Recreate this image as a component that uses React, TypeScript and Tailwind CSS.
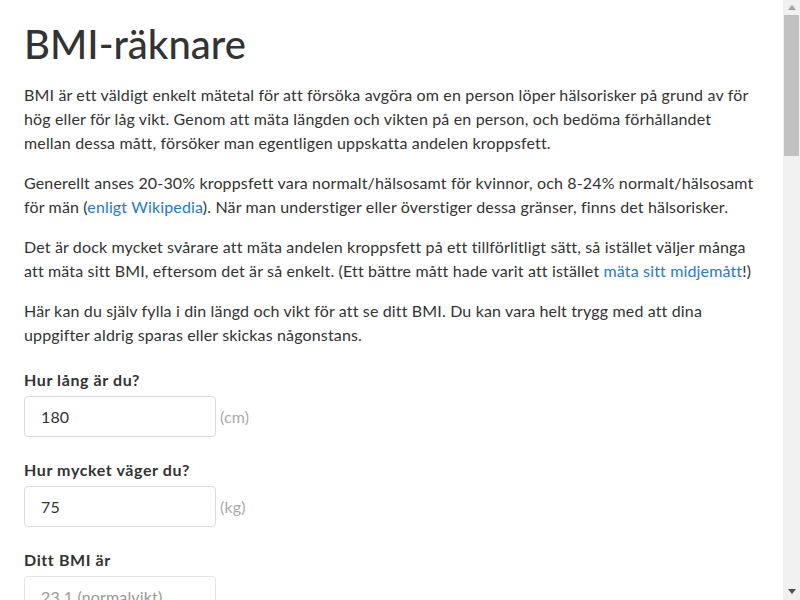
import React, { useState } from 'react';

function bmiLabel(bmi: number) {
  if (bmi < 18.5) return 'undervikt';
  if (bmi < 25) return 'normalvikt';
  if (bmi < 30) return 'övervikt';
  return 'fetma';
}

// the classic scrollbar in the screenshot, drawn over the right edge
function FakeScrollbar() {
  return (
    <div className="fixed right-0 top-0 flex h-screen w-[17px] flex-col bg-[#f1f1f1]">
      <div className="flex h-[15px] items-center justify-center">
        <svg width="8" height="5" viewBox="0 0 8 5"><path d="M0 5 L4 0 L8 5 Z" fill="#a3a3a3" /></svg>
      </div>
      <div className="mx-auto h-[141px] w-[15px] bg-[#c1c1c1]" />
      <div className="flex-1" />
      <div className="flex h-[17px] items-center justify-center">
        <svg width="8" height="5" viewBox="0 0 8 5"><path d="M0 0 L8 0 L4 5 Z" fill="#505050" /></svg>
      </div>
    </div>
  );
}

export default function App() {
  const [height, setHeight] = useState('180');
  const [weight, setWeight] = useState('75');

  const h = parseFloat(height) / 100;
  const w = parseFloat(weight);
  const bmi = h > 0 && w > 0 ? w / (h * h) : 0;
  const result = bmi ? `${bmi.toFixed(1)} (${bmiLabel(bmi)})` : '';

  return (
    <div className="min-h-[2400px] bg-white pl-6 pr-[41px] pt-5 text-[16px] leading-6 tracking-[0.15px] text-[#333] font-['Lato','Liberation_Sans',sans-serif]">
      <h1 className="mb-[15px] text-[40px] leading-[48px] font-medium tracking-normal text-[#333]">BMI-räknare</h1>

      <p className="mb-4">
        BMI är ett väldigt enkelt mätetal för att försöka avgöra om en person löper hälsorisker på grund av för hög eller för låg vikt. Genom att mäta längden och vikten på en person, och bedöma förhållandet mellan dessa mått, försöker man egentligen uppskatta andelen kroppsfett.
      </p>
      <p className="mb-4">
        Generellt anses 20-30% kroppsfett vara normalt/hälsosamt för kvinnor, och 8-24% normalt/hälsosamt för män (<a href="#" className="text-[#2478d8]">enligt Wikipedia</a>). När man understiger eller överstiger dessa gränser, finns det hälsorisker.
      </p>
      <p className="mb-4">
        Det är dock mycket svårare att mäta andelen kroppsfett på ett tillförlitligt sätt, så istället väljer många att mäta sitt BMI, eftersom det är så enkelt. (Ett bättre mått hade varit att istället <a href="#" className="text-[#2478d8]">mäta sitt midjemått</a>!)
      </p>
      <p className="mb-[21px]">
        Här kan du själv fylla i din längd och vikt för att se ditt BMI. Du kan vara helt trygg med att dina uppgifter aldrig sparas eller skickas någonstans.
      </p>

      <div className="flex flex-col gap-[21px]">
        <div>
          <label className="mb-1 block font-bold tracking-[0.6px]">Hur lång är du?</label>
          <div className="flex items-center gap-1">
            <input
              value={height}
              onChange={(e) => setHeight(e.target.value)}
              className="h-[41px] w-[192px] rounded border border-[#dcdcdc] px-4 text-[#333] outline-none"
            />
            <span className="text-[#aaa]">(cm)</span>
          </div>
        </div>

        <div>
          <label className="mb-1 block font-bold tracking-[0.6px]">Hur mycket väger du?</label>
          <div className="flex items-center gap-1">
            <input
              value={weight}
              onChange={(e) => setWeight(e.target.value)}
              className="h-[41px] w-[192px] rounded border border-[#dcdcdc] px-4 text-[#333] outline-none"
            />
            <span className="text-[#aaa]">(kg)</span>
          </div>
        </div>

        <div>
          <label className="mb-1 block font-bold tracking-[0.6px]">Ditt BMI är</label>
          <input
            readOnly
            value={result}
            className="h-[41px] w-[192px] rounded border border-[#e4e4e4] px-4 text-[#999] outline-none"
          />
        </div>
      </div>

      <FakeScrollbar />
    </div>
  );
}
